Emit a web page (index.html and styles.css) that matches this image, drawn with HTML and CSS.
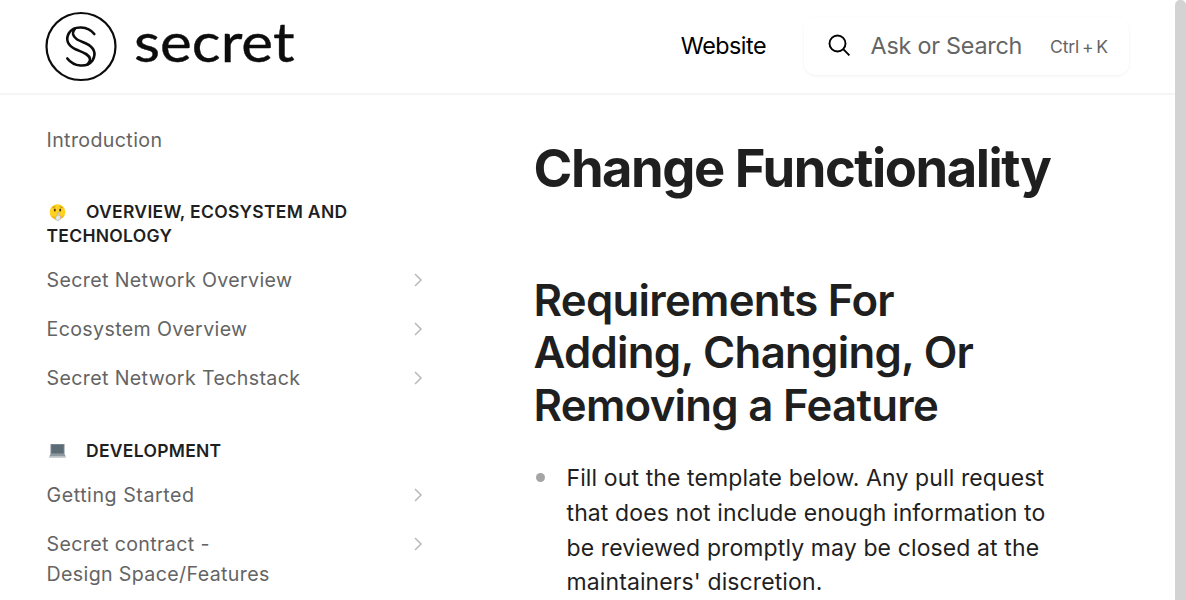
FILE: index.html
```html
<!DOCTYPE html>
<html lang="en">
<head>
<meta charset="utf-8">
<title>Change Functionality</title>
<link rel="stylesheet" href="styles.css">
</head>
<body>
<div class="page">
  <header class="header">
    <a class="logo">
      <svg class="logo-art" width="262" height="84" viewBox="0 0 262 84" role="img" aria-label="secret">
        <g fill="none" stroke="#0c0c0c">
          <ellipse cx="36" cy="42.500" rx="34.500" ry="33.500" stroke-width="2.200"/>
          <path d="M49.300 30C43 22 29 21 24 29C20 36 23 42 31 45.500C38 48.500 44 50 45 55C45.200 57 44 59 42.500 60.500" stroke-width="2.600" stroke-linecap="round"/>
          <path d="M22.300 54.500C29 63 42 64 47.500 56.500C52 49 48.500 43 41 39.500C34 36.500 29 35 28 30C27.800 28 28.500 26.500 30 24.500" stroke-width="2.600" stroke-linecap="round"/>
        </g>
        <text class="wordmark" x="89" y="58" textLength="160.500" lengthAdjust="spacingAndGlyphs">secret</text>
      </svg>
    </a>
    <nav class="actions">
      <a class="site-link">Website</a>
      <div class="search">
        <svg class="search-icon" width="24" height="24" viewBox="0 0 24 24" fill="none" stroke="#000" stroke-width="1.9"><circle cx="9.500" cy="9.500" r="8"/><path d="M15.200 15.200l6.200 6.200"/></svg>
        <span class="search-label">Ask or Search</span>
        <kbd class="shortcut">Ctrl + K</kbd>
      </div>
    </nav>
  </header>
  <div class="body">
    <aside class="sidebar">
      <a class="item intro">Introduction</a>
      <h5 class="group"><svg class="emoji" width="19" height="19" viewBox="0 0 19 19"><circle cx="9.500" cy="9" r="7.800" fill="#ffd21f"/><path d="M2.500 12A7.800 7.800 0 0 0 16.500 12Q10 16 2.500 12Z" fill="#f8b51c"/><ellipse cx="6.800" cy="7" rx="1" ry="1.500" fill="#4b3717"/><ellipse cx="12.200" cy="7" rx="1" ry="1.500" fill="#4b3717"/><path d="M4.500 4.600l2.800-.9M11.700 3.700l2.800.9" stroke="#b98219" stroke-width=".9"/><path d="M9.300 9.500h1.500v3l2 .8-.5 3-2.300 1.500-2.200-1-.3-3 1.800-1Z" fill="#e4e6e8" stroke="#9da3a8" stroke-width=".5"/></svg>Overview, Ecosystem and Technology</h5>
      <a class="item">Secret Network Overview<svg class="chevron" width="16" height="16" viewBox="0 0 16 16"><path d="M5 2l6 6-6 6"/></svg></a>
      <a class="item">Ecosystem Overview<svg class="chevron" width="16" height="16" viewBox="0 0 16 16"><path d="M5 2l6 6-6 6"/></svg></a>
      <a class="item">Secret Network Techstack<svg class="chevron" width="16" height="16" viewBox="0 0 16 16"><path d="M5 2l6 6-6 6"/></svg></a>
      <h5 class="group second"><svg class="emoji" width="19" height="19" viewBox="0 0 19 19"><path d="M2.500 2h14v10h-14Z" fill="#78858e"/><path d="M3.500 3h12v8h-12Z" fill="#5c6c76"/><path d="M2.500 12h14l1.300 2.500H1.200Z" fill="#8d989f"/><path d="M1.200 14.500h16.600v1.200H1.200Z" fill="#b3bbc0"/></svg>Development</h5>
      <a class="item loose">Getting Started<svg class="chevron" width="16" height="16" viewBox="0 0 16 16"><path d="M5 2l6 6-6 6"/></svg></a>
      <a class="item">Secret contract -<br>Design Space/Features<svg class="chevron" width="16" height="16" viewBox="0 0 16 16"><path d="M5 2l6 6-6 6"/></svg></a>
    </aside>
    <main class="content">
      <h1 class="title">Change Functionality</h1>
      <h2 class="heading">Requirements For Adding, Changing, Or Removing a Feature</h2>
      <ul class="list">
        <li class="entry"><span class="bullet"></span><p class="text">Fill out the template below. Any pull request that does not include enough information to be reviewed promptly may be closed at the maintainers' discretion.</p></li>
      </ul>
    </main>
  </div>
</div>
<div class="scrollbar"><div class="thumb"></div></div>
</body>
</html>
```
FILE: styles.css
```css
* { box-sizing: border-box; }
body {
  margin: 0;
  height: 600px;
  overflow: hidden;
  display: flex;
  background: #fff;
  color: #1f1f1f;
  font-family: Inter, sans-serif;
}
.page { width: 1175px; height: 600px; overflow: hidden; }
.header {
  height: 95px;
  padding: 0 46px 2px 45px;
  display: flex;
  align-items: center;
  justify-content: space-between;
  border-bottom: 2px solid #f5f5f5;
}
.logo { display: flex; }
.logo-art { overflow: visible; }
.wordmark { font-family: Lato, sans-serif; font-size: 55px; fill: #0c0c0c; stroke: #0c0c0c; stroke-width: .4; }
.actions { display: flex; align-items: center; gap: 38px; }
.site-link { color: #000; font-size: 23.333px; line-height: 35px; letter-spacing: -.5px; }
.search {
  width: 325px;
  height: 58px;
  padding: 0 21px 0 24px;
  display: flex;
  align-items: center;
  border-radius: 12px;
  box-shadow: 0 1px 3px rgba(0, 0, 0, .06);
}
.search-icon { flex: none; }
.search-label { margin-left: 18.500px; color: #646464; font-size: 23.333px; letter-spacing: -.22px; white-space: nowrap; }
.shortcut { margin-left: auto; color: #646464; font-family: inherit; font-size: 17.5px; letter-spacing: -.1px; white-space: nowrap; word-spacing: -2px; position: relative; top: 1px; }
.body { display: flex; }
.sidebar { width: 443px; padding: 20.500px 0 0 46.500px; }
.item {
  display: flex;
  justify-content: space-between;
  position: relative;
  padding: 10px 17.500px 9.900px 0;
  color: #646464;
  font-size: 19.6px;
  line-height: 29.17px;
  letter-spacing: .37px;
}
.item.loose { letter-spacing: .56px; }
.intro { letter-spacing: .38px; }
.chevron { flex: none; margin-top: 6px; fill: none; stroke: #b9b9b9; stroke-width: 1.5; }
.group {
  margin: 35.400px 0 0;
  padding-bottom: 8.300px;
  width: 330px;
  font-size: 17.5px;
  font-weight: 600;
  line-height: 24px;
  letter-spacing: .29px;
  text-transform: uppercase;
}
.group.second { margin-top: 35.700px; }
.emoji { margin: 0 19.500px 0 1px; vertical-align: -4px; }
.content { width: 560px; padding: 41px 0 0 90.500px; }
.title {
  margin: 0;
  font-size: 52.5px;
  font-weight: 700;
  line-height: 65.6px;
  letter-spacing: -1.46px;
  white-space: nowrap;
}
.heading { margin: 73.400px 0 0; width: 460px; font-size: 43.75px; font-weight: 600; line-height: 52.5px; letter-spacing: -.73px; }
.list { list-style: none; margin: 28.600px 0 0; padding: 0; }
.entry { display: flex; width: 530px; }
.bullet { flex: none; width: 9px; height: 9px; margin: 12px 21.500px 0 2.500px; border-radius: 50%; background: #a5a5a5; }
.text { margin: 0; font-size: 23px; line-height: 34.8px; letter-spacing: .11px; }
.scrollbar { width: 11px; height: 600px; background: #fff; }
.thumb { height: 620px; border-radius: 5px; background: #d3d3d3; }
```
